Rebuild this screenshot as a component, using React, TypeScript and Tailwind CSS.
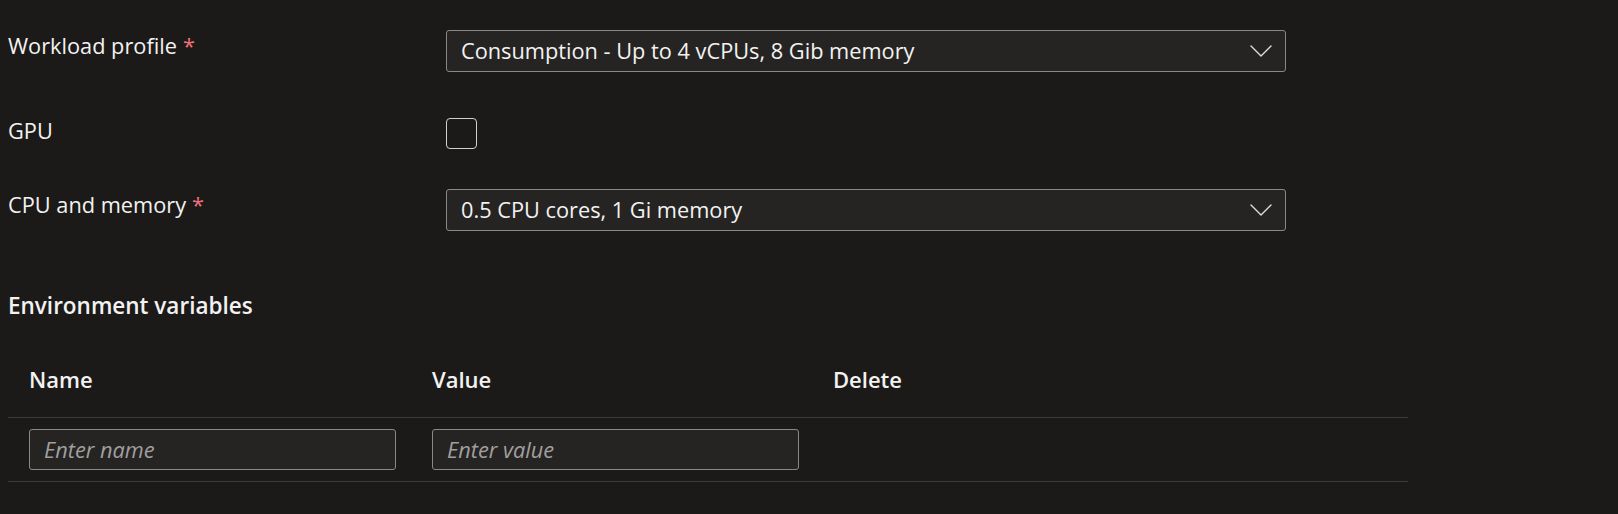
import React from "react";

const font = { fontFamily: '"Open Sans", "Noto Sans", sans-serif' };

function Chevron() {
  return (
    <svg width="22" height="12" viewBox="0 0 22 12" fill="none" className="shrink-0">
      <path d="M1 1l10 10L21 1" stroke="#e1dfdd" strokeWidth="1.4" strokeLinecap="round" strokeLinejoin="round" />
    </svg>
  );
}

function Label({ text, required }: { text: string; required?: boolean }) {
  return (
    <div className="w-[446px] shrink-0 pl-2 text-[21.75px] leading-[28px] text-[#f3f2f1]">
      {text}
      {required && <span className="ml-[6px] text-[#f1707b]">*</span>}
    </div>
  );
}

function Dropdown({ value }: { value: string }) {
  return (
    <div className="flex h-[42px] w-[840px] items-center justify-between rounded-[3px] border border-[#8a8886] bg-[#252423] pl-[14px] pr-[13px]">
      <span className="text-[21.75px] leading-[28px] text-[#f3f2f1]">{value}</span>
      <Chevron />
    </div>
  );
}

function TextInput({ placeholder }: { placeholder: string }) {
  return (
    <input
      placeholder={placeholder}
      className="h-[41px] w-[367px] rounded-[3px] border border-[#8a8886] bg-[#252423] px-[14px] text-[21.75px] italic text-[#f3f2f1] outline-none placeholder:text-[#a19f9d]"
      style={font}
    />
  );
}

export default function App() {
  return (
    <div className="h-[514px] w-full overflow-hidden bg-[#1b1a19]" style={font}>
      {/* Workload profile */}
      <div className="flex pt-[30px]">
        <div className="pt-[2px]">
          <Label text="Workload profile" required />
        </div>
        <Dropdown value="Consumption - Up to 4 vCPUs, 8 Gib memory" />
      </div>

      {/* GPU */}
      <div className="mt-[46px] flex">
        <div className="-mt-[1px]">
          <Label text="GPU" />
        </div>
        <div className="h-[31px] w-[31px] rounded-[4px] border border-[#d2d0ce]" />
      </div>

      {/* CPU and memory */}
      <div className="mt-[40px] flex">
        <div className="pt-[2px]">
          <Label text="CPU and memory" required />
        </div>
        <Dropdown value="0.5 CPU cores, 1 Gi memory" />
      </div>

      {/* Environment variables */}
      <h2 className="mt-[61px] pl-2 text-[22.5px] font-semibold leading-[28px] text-[#f3f2f1]">
        Environment variables
      </h2>

      <div className="ml-2 mt-[24px] w-[1400px]">
        <div className="grid h-[74px] grid-cols-[403px_401px_1fr] items-center border-b border-[#3b3a39] pb-[2px] text-[22px] font-semibold text-[#f3f2f1]">
          <div className="pl-[21px]">Name</div>
          <div className="pl-[21px]">Value</div>
          <div className="pl-[21px]">Delete</div>
        </div>
        <div className="grid h-[64px] grid-cols-[403px_401px_1fr] items-center border-b border-[#3b3a39]">
          <div className="pl-[21px]">
            <TextInput placeholder="Enter name" />
          </div>
          <div className="pl-[21px]">
            <TextInput placeholder="Enter value" />
          </div>
          <div />
        </div>
      </div>
    </div>
  );
}
